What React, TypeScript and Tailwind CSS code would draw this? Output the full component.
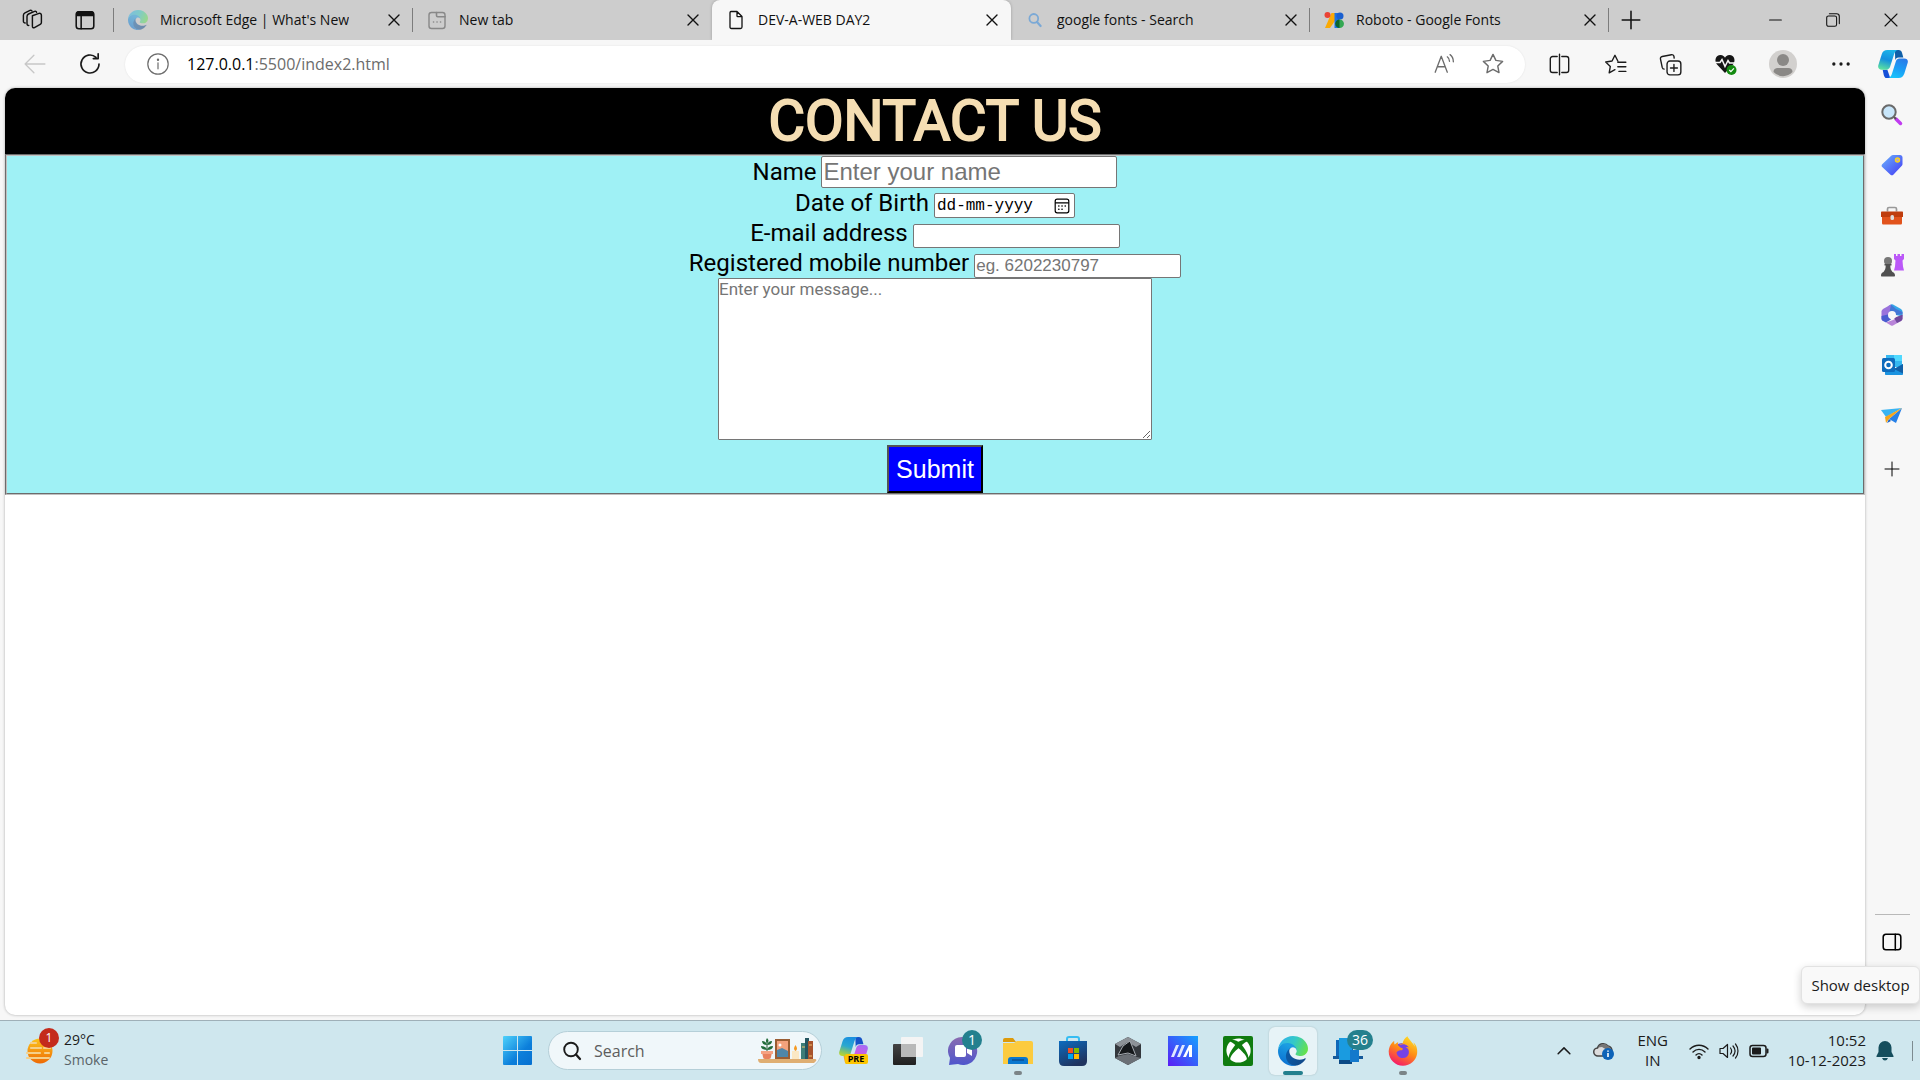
import React from "react";
import { FaXbox, FaFirefoxBrowser } from "react-icons/fa6";

type Kids = { children: React.ReactNode };

const Line = ({ size = 20, w = 1.2, className = "", children }: Kids & { size?: number; w?: number; className?: string }) => (
  <svg width={size} height={size} viewBox="0 0 20 20" fill="none" stroke="currentColor" strokeWidth={w} strokeLinecap="round" strokeLinejoin="round" className={className} aria-hidden="true">
    {children}
  </svg>
);

const EdgeLogo = ({ size, id, className = "" }: { size: number; id: string; className?: string }) => (
  <svg width={size} height={size} viewBox="0 0 256 256" className={className} aria-hidden="true">
    <defs>
      <linearGradient id={`${id}a`} x1="0.2" y1="0" x2="1" y2="0.2">
        <stop offset="0" stopColor="#0c59a4" />
        <stop offset="1" stopColor="#114a8b" />
      </linearGradient>
      <linearGradient id={`${id}b`} x1="0.6" y1="0.2" x2="0.3" y2="1">
        <stop offset="0" stopColor="#1b9de2" />
        <stop offset="1" stopColor="#0a6ed0" />
      </linearGradient>
      <linearGradient id={`${id}c`} x1="0" y1="0.3" x2="1" y2="0.6">
        <stop offset="0" stopColor="#2fb0ee" />
        <stop offset="0.5" stopColor="#35c9c6" />
        <stop offset="1" stopColor="#66e24b" />
      </linearGradient>
    </defs>
    <path fill={`url(#${id}a)`} d="M231 190.5c-3.4 1.8-6.9 3.4-10.5 4.7a101.500 101.500 0 0 1-35.900 6.400c-47.300 0-88.500-32.500-88.500-74.300 0-11.400 6.400-21.900 16.400-27.300-42.800 1.800-53.800 46.400-53.800 72.500 0 74 68.100 81.400 82.800 81.400 7.900 0 19.800-2.300 27-4.600l1.300-.4a128.300 128.300 0 0 0 66.600-52.800 4 4 0 0 0-5.400-5.600z" />
    <path fill={`url(#${id}b)`} d="M105.700 241.400c-8.900-5.500-16.600-12.800-22.700-21.300a80.500 80.500 0 0 1 29.500-120c3.200-1.500 8.500-4.100 15.600-4a32.400 32.400 0 0 1 25.700 13c4 5.300 6.300 11.800 6.400 18.500 0-.2 24.500-79.600-80-79.600-43.900 0-80 41.600-80 78.200-.2 19.300 4 38.500 12.100 56 27.600 58.800 94.800 87.600 156.400 67.100-21.100 6.600-44.100 3.700-62.900-8z" />
    <path fill={`url(#${id}c)`} d="M152.300 148.900c-.9 1-3.400 2.500-3.400 5.600 0 2.600 1.700 5.200 4.800 7.300 14.300 10 41.400 8.600 41.500 8.600 10.700 0 21.100-2.900 30.300-8.300a61.400 61.400 0 0 0 30.400-52.900c.3-22.400-8-37.300-11.300-43.900C223.500 23.900 177.700 0 128 0 58 0 1 56.200 0 126.200c.5-36.500 36.800-66 80-66 3.500 0 23.500.3 42 10.100 16.300 8.600 24.900 18.900 30.800 29.200 6.200 10.700 7.300 24.100 7.300 29.500s-2.700 13.300-7.800 19.900z" />
  </svg>
);

const Copilot = ({ id, size, pre = false }: { id: string; size: number; pre?: boolean }) => (
  <svg width={size} height={size} viewBox="0 0 32 32" aria-hidden="true">
    <defs>
      <linearGradient id={`${id}l`} x1="0.6" y1="0" x2="0.3" y2="1">
        <stop offset="0" stopColor={pre ? "#1a8fe0" : "#1bb5e8"} />
        <stop offset="0.5" stopColor={pre ? "#2aa8d0" : "#1490df"} />
        <stop offset="1" stopColor={pre ? "#b8d430" : "#5be0a0"} />
      </linearGradient>
      <linearGradient id={`${id}r`} x1="0.7" y1="0" x2="0.3" y2="1">
        <stop offset="0" stopColor={pre ? "#a56cf5" : "#2a7be8"} />
        <stop offset="0.5" stopColor={pre ? "#d25be0" : "#1b9cf5"} />
        <stop offset="1" stopColor={pre ? "#f5679a" : "#19c4fb"} />
      </linearGradient>
    </defs>
    <path d="M18 1h4c2 0 3 1 3.600 3L27 9h-5c-2 0-3 1-3.600 3z" fill={pre ? "#1553c8" : "#0f5fa8"} />
    <path d="M8 31h5l-3-9H5l1 5c.4 2 1 3 2 4z" fill={pre ? "#f5a623" : "#1650d8"} />
    <path d="M10 1h11c-2 .7-3 2-3.700 4l-4.400 14c-.7 2-2 3-4 3H4c-3 0-4.500-2-3.600-5L4 5.500C5 2.500 7 1 10 1z" fill={`url(#${id}l)`} />
    <path d="M22 31H11c2-.7 3-2 3.700-4l4.400-14c.7-2 2-3 4-3H28c3 0 4.500 2 3.600 5L28 26.500c-1 3-3 4.500-6 4.500z" fill={`url(#${id}r)`} />
  </svg>
);

const Divider = ({ dim = false }: { dim?: boolean }) => <span className={dim ? "h-6 w-px bg-transparent" : "h-6 w-px bg-[#7c7c7c]"} />;

const Cross = () => (
  <Line size={20} w={1.4}><path d="M5 5l10 10M15 5L5 15" /></Line>
);

const Tab = ({ icon, title, active = false, divider = false }: { icon: React.ReactNode; title: string; active?: boolean; divider?: boolean }) => (
  <div className={active ? "flex h-10 w-[299px] shrink items-center rounded-t-lg bg-[#f7f7f7] shadow-[0_0_3px_#00000040]" : "flex h-10 w-[299px] shrink items-center"}>
    <button role="tab" aria-selected={active} className="flex min-w-0 flex-1 items-center pl-[14px] text-left">
      <span className="flex w-5 shrink-0 justify-center">{icon}</span>
      <span className="ml-3 truncate">{title}</span>
    </button>
    <button aria-label={`Close ${title}`} className="mr-2"><Cross /></button>
    <Divider dim={!divider} />
  </div>
);

const PanelButton = ({ label, children, className = "" }: Kids & { label: string; className?: string }) => (
  <button aria-label={label} className={`flex items-center justify-center ${className}`}>{children}</button>
);

const TabStrip = () => (
  <header className="flex h-10 shrink-0 items-center bg-[#cdcdcd] text-sm text-[#111]">
    <PanelButton label="Workspaces" className="ml-[21px] w-6">
      <Line size={24}>
        <path d="M9.500 6.500l5.500-2c1-.3 2 .3 2 1.500v6c0 .8-.3 1.200-1 1.600l-4.800 2.700c-1 .5-1.700 0-1.700-1V8c0-.8 0-1.200 0-1.500z" />
        <path d="M6.500 14.500c-1 .2-1.500-.4-1.500-1.500V7c0-1 .5-1.600 1.300-2l5-2.200c.8-.3 1.500 0 1.700.7" />
        <path d="M3.500 12.500c-.8 0-1.500-.5-1.500-1.500V6c0-1 .5-1.600 1.300-2l4.200-2c.8-.3 1.500 0 1.700.6" />
      </Line>
    </PanelButton>
    <PanelButton label="Tab actions" className="ml-7 mr-4 w-6">
      <Line size={22} w={1.400}>
        <rect x="2" y="2.500" width="16" height="15.500" rx="2.500" />
        <path d="M2.500 6V4.500a2 2 0 0 1 2-2h11a2 2 0 0 1 2 2V6z" fill="currentColor" />
        <path d="M6.500 6v12" />
      </Line>
    </PanelButton>
    <Divider />
    <div role="tablist" className="flex min-w-0">
      <Tab divider title="Microsoft Edge | What's New" icon={<EdgeLogo size={20} id="tabedge" className="opacity-50" />} />
      <Tab title="New tab" icon={
        <Line size={21} w={1.400} className="text-[#888]">
          <rect x="2" y="2" width="16" height="16" rx="2.500" /><path d="M9.500 2v3c0 .8.400 1.200 1.200 1.200H18M6.500 11.500h.1M10 11.500h.1M13.500 11.500h.1" strokeWidth="1.600" />
        </Line>} />
      <Tab active title="DEV-A-WEB DAY2" icon={
        <Line size={22} w={1.300}><path d="M5 1.500h6L16 6.500V17c0 1-.5 1.500-1.500 1.500h-9c-1 0-1.500-.5-1.500-1.500V3c0-1 .3-1.500 1-1.500zM11 1.500V6c0 .5.200.7.700.7H16" /></Line>} />
      <Tab divider title="google fonts - Search" icon={
        <Line size={16} w={2.200} className="text-[#7ba9d6]"><circle cx="8.500" cy="8" r="5.500" /><path d="M12.500 12.500L17 17.500" strokeWidth="2.800" /></Line>} />
      <Tab divider title="Roboto - Google Fonts" icon={
        <svg width="20" height="20" viewBox="0 0 20 20" aria-hidden="true">
          <path d="M7.500 3h4v7L6 18H1z" fill="#fbaa05" /><circle cx="3.500" cy="5" r="3" fill="#ea4335" /><path d="M10.500 3h5v15h-5z" fill="#1a73e8" />
          <circle cx="16" cy="6" r="3.500" fill="#1a5fd0" /><path d="M15 9.500h.7a4.200 4.200 0 0 1 0 8.500H15z" fill="#34a853" /><path d="M15.500 9.500a4.200 4.200 0 0 0 0 8.500z" fill="#0d652d" />
        </svg>} />
    </div>
    <PanelButton label="New tab" className="ml-[11px]"><Line size={22} w={1.400}><path d="M10 2v16M2 10h16" /></Line></PanelButton>
    <div className="ml-auto flex pr-[18px]">
      <PanelButton label="Minimize" className="w-[22px]"><Line size={18} w={1.300}><path d="M4 10h13" /></Line></PanelButton>
      <PanelButton label="Restore" className="ml-9 w-[22px]">
        <Line size={18}><rect x="3" y="5.500" width="11" height="11.500" rx="2" /><path d="M6 3h8a3 3 0 0 1 3 3v8" /></Line>
      </PanelButton>
      <PanelButton label="Close" className="ml-9 w-[22px]"><Line size={20} w={1.100}><path d="M4 4l12 12M16 4L4 16" /></Line></PanelButton>
    </div>
  </header>
);

const star = "M10 2l2.400 5 5.600.8-4 3.900 1 5.500-5-2.700-5 2.700 1-5.500-4-3.900 5.600-.8z";

const AddressBar = () => (
  <div className="flex h-12 shrink-0 items-center bg-[#f7f7f7] text-[#1b1b1b]">
    <PanelButton label="Back" className="ml-6 text-[#c8c8c8]"><Line size={22}><path d="M9 2L1 10l8 8M1 10h18" /></Line></PanelButton>
    <PanelButton label="Refresh" className="ml-8"><Line size={24} w={1.400}><path d="M17.500 10A7.500 7.500 0 1 1 15 4.400M16.800 1.500v4h-4" /></Line></PanelButton>
    <div className="ml-[23px] flex h-[37px] flex-1 items-center rounded-full bg-white pl-[21px] pr-5 text-[#6c6c6c] shadow-[0_0_2px_#00000018]">
      <Line size={24} w={1}><circle cx="10" cy="10" r="8.500" /><path d="M10 9v5" /><circle cx="10" cy="6.400" r=".5" fill="currentColor" /></Line>
      <a href="#" className="ml-[17px] text-base"><span className="text-black">127.0.0.1</span>:5500/index2.html</a>
      <PanelButton label="Read aloud" className="ml-auto">
        <Line size={22}><path d="M2 17.500L7.500 3 13 17.500M4 12.500h7M13 3.500c1.300 1 2 2.300 2 4M15.500 1.500c2 1.500 3 3.600 3 6.500" /></Line>
      </PanelButton>
      <PanelButton label="Favorite this page" className="ml-[26px]"><Line size={24}><path d={star} /></Line></PanelButton>
    </div>
    <div className="flex items-center pl-[22px] pr-3">
      <PanelButton label="Split screen" className="w-6"><Line size={23}><path d="M8 3H4a2 2 0 0 0-2 2v10a2 2 0 0 0 2 2h4M12 3h4a2 2 0 0 1 2 2v10a2 2 0 0 1-2 2h-4M10 1v18" /></Line></PanelButton>
      <PanelButton label="Favorites" className="ml-8 w-6"><Line size={23}><path d="M12 7L9.500 2 7 7l-5.500.8 4 3.900-1 5.500 5-2.700M12 8h7M12 12h7M13 16h6" /></Line></PanelButton>
      <PanelButton label="Collections" className="ml-[31px] w-6">
        <Line size={23}><rect x="7" y="7" width="12" height="12" rx="2.500" /><path d="M13 10v6M10 13h6M4.500 14c-1 0-1.500-.7-1.700-1.500L1.300 5.300C1 4 1.700 3.200 2.800 3l8-1.500c1.100-.2 2 .4 2.200 1.500l.2 1.500" /></Line>
      </PanelButton>
      <PanelButton label="Browser essentials" className="ml-8 w-6">
        <svg width="24" height="24" viewBox="0 0 24 24" aria-hidden="true">
          <path d="M11 21L3 12.500C0 9 1.500 3 6.500 3 9 3 10.300 4.500 11 5.700 11.700 4.500 13 3 15.500 3 20.500 3 22 9 19 12.500z" fill="#151515" />
          <path d="M1 10.500h5l2-3 3 7 3-6 1.500 2.500H22" fill="none" stroke="#f7f7f7" strokeWidth="1.500" />
          <circle cx="17.500" cy="18" r="5" fill="#138a10" /><path d="M15.300 18l1.600 1.600 3-3.200" stroke="#fff" fill="none" strokeWidth="1.200" />
        </svg>
      </PanelButton>
      <PanelButton label="Profile" className="ml-[31px]">
        <svg width="28" height="28" viewBox="0 0 28 28" aria-hidden="true"><circle cx="14" cy="14" r="14" fill="#d2d0ce" /><circle cx="14" cy="10" r="6" fill="#8a8886" /><path d="M4.500 22c0-3 2-4 4-4h11c2 0 4 1 4 4a13 13 0 0 1-19 0z" fill="#8a8886" /></svg>
      </PanelButton>
      <PanelButton label="Settings and more" className="ml-8 w-6"><Line size={22}><g fill="currentColor" stroke="none"><circle cx="3.500" cy="10" r="1.500" /><circle cx="10" cy="10" r="1.500" /><circle cx="16.500" cy="10" r="1.500" /></g></Line></PanelButton>
      <PanelButton label="Copilot" className="ml-[25px]"><Copilot id="cp" size={30} /></PanelButton>
    </div>
  </div>
);

const field = "rounded-[2px] border border-[#767676] bg-white px-px outline-none placeholder:text-[#757575] placeholder:opacity-100 font-['Liberation_Sans',sans-serif]";

const ContactPage = () => (
  <main className="ml-[5px] min-w-0 flex-1 overflow-hidden rounded-[10px] bg-white shadow-[0_0_3px_#00000050] font-['Roboto',sans-serif] text-black">
    <h1 className="flex h-[66px] items-center justify-center bg-black text-[56px] leading-[66px] font-normal text-[#f5deb3] [-webkit-text-stroke:2px_#f5deb3]">CONTACT US</h1>
    <form onSubmit={(e) => e.preventDefault()} className="flex flex-col items-center border-2 border-[#c0c0c0] bg-[#9ff1f5] text-2xl leading-[30px] [border-style:groove]">
      <div className="flex items-center gap-[5px]">
        <label htmlFor="name">Name</label>
        <input id="name" placeholder="Enter your name" className={`h-8 w-[296px] text-2xl ${field}`} />
      </div>
      <div className="flex items-end gap-[5px]">
        <label htmlFor="dob">Date of Birth</label>
        <div className="flex h-[25px] w-[141px] items-center rounded-[2px] border border-[#767676] bg-white pr-1 pl-[2px]">
          <input id="dob" placeholder="dd-mm-yyyy" className="h-5 w-full min-w-0 font-['Liberation_Mono',monospace] text-base leading-5 outline-none placeholder:text-black placeholder:opacity-100" />
          <PanelButton label="Open calendar">
            <Line size={16} w={1.500}><rect x="1.500" y="1.500" width="17" height="17" rx="2.500" /><path d="M2 6h16" /><path d="M6 10h.1M10 10h.1M14 10h.1M6 14h.1M10 14h.1" strokeWidth="2" /></Line>
          </PanelButton>
        </div>
      </div>
      <div className="flex items-end gap-[5px]">
        <label htmlFor="email">E-mail address</label>
        <input id="email" type="email" className={`h-6 w-[207px] text-[17px] ${field}`} />
      </div>
      <div className="flex items-end gap-[5px]">
        <label htmlFor="mobile">Registered mobile number</label>
        <input id="mobile" type="tel" placeholder="eg. 6202230797" className={`h-6 w-[207px] text-[17px] ${field}`} />
      </div>
      <textarea aria-label="Message" placeholder="Enter your message..." className="h-[162px] w-[434px] resize rounded-[1px] border border-[#767676] bg-white text-[17px] leading-5 outline-none placeholder:text-[#757575] placeholder:opacity-100" />
      <button type="submit" className="mt-[5px] h-12 w-24 border-2 border-black bg-[#0000ff] font-['Liberation_Sans',sans-serif] text-[25px] text-white [border-style:outset]">Submit</button>
    </form>
  </main>
);

const SideRail = () => (
  <aside className="flex w-[55px] shrink-0 flex-col items-center pt-[15px] pr-px text-black">
    <div className="flex flex-col items-center gap-[26px]">
      <PanelButton label="Search">
        <svg width="24" height="24" viewBox="0 0 24 24" aria-hidden="true"><path d="M16 16l4.500 4.500" stroke="#c03bf0" strokeWidth="3.500" strokeLinecap="round" /><path d="M13 13l3 3" stroke="#555" strokeWidth="2" /><circle cx="9" cy="9" r="6.700" fill="#c8e6fa" stroke="#6a6a6a" strokeWidth="2" /></svg>
      </PanelButton>
      <PanelButton label="Shopping">
        <svg width="24" height="24" viewBox="0 0 24 24" aria-hidden="true"><defs><linearGradient id="tag" x1="0" y1="0" x2="1" y2="1"><stop offset="0" stopColor="#6ab4fb" /><stop offset="1" stopColor="#4338f5" /></linearGradient></defs><path d="M13 2h7c1.500 0 2.500 1 2.500 2.500V11c0 .7-.2 1.200-.7 1.700l-8.500 9c-.8.800-2 .8-2.800 0L2.200 14c-.8-.8-.8-2 0-2.800l9-8.500c.5-.5 1.100-.7 1.800-.7z" fill="url(#tag)" /><circle cx="17.500" cy="7" r="2" fill="#b9a3d0" stroke="#fbd41b" strokeWidth="1.400" /></svg>
      </PanelButton>
      <PanelButton label="Tools">
        <svg width="24" height="24" viewBox="0 0 24 24" aria-hidden="true"><path d="M7.500 8.500V6C7.500 5 8 4.500 9 4.500h6c1 0 1.500.5 1.500 1.500v2.500" fill="none" stroke="#999" strokeWidth="1.700" /><path d="M2 12h20v8c0 1-.6 1.500-1.500 1.500h-17c-1 0-1.500-.5-1.500-1.500z" fill="#e2531c" /><path d="M2 8.500h20c.7 0 1 .4 1 1V14H1V9.500c0-.6.300-1 1-1z" fill="#bf3d0e" /><rect x="10.500" y="12" width="3.500" height="5" rx="1.500" fill="#ddd" /></svg>
      </PanelButton>
      <PanelButton label="Games">
        <svg width="24" height="24" viewBox="0 0 24 24" aria-hidden="true"><path d="M14 1h2v2h1.500V1h2.500v2h1.500V1H24v5l-1.500 1.500.5 6 1 4H14l1-4 .5-6L14 6z" fill="#bb58f8" /><circle cx="8" cy="8" r="4" fill="#777" /><path d="M4.500 11h7v1.500h-1.200c0 3 .7 4.500 2.200 6.500 1.500.5 2.500 1.500 2.500 3.500 0 .7-.3 1-1 1H2c-.7 0-1-.3-1-1 0-2 1-3 2.500-3.500 1.500-2 2.200-3.500 2.200-6.500H4.500z" fill="#505050" /></svg>
      </PanelButton>
      <PanelButton label="Microsoft 365">
        <svg width="24" height="24" viewBox="0 0 24 24" aria-hidden="true">
          <path d="M11 1.500q1-.6 2 0l8 4.500q1.500 1 1.500 2.500v5L16 12 8.500 6.500z" fill="#35a7e8" />
          <path d="M11 1.500L8.500 3v9l3.500-4 4 4 6.500-1V9L16 6z" fill="#4277d6" />
          <path d="M11 1.500L3 6q-1.500 1-1.500 2.500v7q0 1.500 1 2.300l6-3.300z" fill="#9a72dc" />
          <path d="M1.500 13v2.500q0 1.500 1.500 2.500l3 1.500 5-3-3-5z" fill="#4b5cd0" />
          <path d="M6 19.500l5 3q1 .5 2 0l8-4.500q1.500-1 1.500-2.500v-4L13 17z" fill="#b884d8" />
          <path d="M22.500 11.500v4q0 1.500-1.500 2.500l-4 2-3-5z" fill="#70489c" />
          <circle cx="12" cy="12" r="4" fill="#f7f7f7" />
        </svg>
      </PanelButton>
      <PanelButton label="Outlook">
        <svg width="24" height="24" viewBox="0 0 24 24" aria-hidden="true"><path d="M6 2h16v12H6z" fill="#35b8f1" /><path d="M14 2h8v6h-8z" fill="#50d9ff" /><path d="M5 12l9 4 9-5v10c0 .7-.4 1-1 1H6c-.6 0-1-.3-1-1z" fill="#1b93e0" /><path d="M14 16l9-5v9.500z" fill="#1160a8" /><rect x="2" y="5" width="13" height="14" rx="1.500" fill="#0f6cbd" /><circle cx="8.500" cy="12" r="3.300" fill="none" stroke="#fff" strokeWidth="2" /></svg>
      </PanelButton>
      <PanelButton label="Drop">
        <svg width="24" height="24" viewBox="0 0 24 24" aria-hidden="true"><path d="M1 7l21-2-16 9z" fill="#39b4f2" /><path d="M22 5l-6 15-7-4z" fill="#2680e8" /><path d="M5 14l17-9L9 16l-3 4z" fill="#f5a51b" /><path d="M9 16l-2 4 4-2z" fill="#1a5fc0" /></svg>
      </PanelButton>
    </div>
    <PanelButton label="Customize" className="mt-8"><Line size={20} w={1}><path d="M10 3v14M3 10h14" /></Line></PanelButton>
    <span className="mt-auto h-px w-[35px] bg-[#b9b9b9]" />
    <PanelButton label="Toggle sidebar" className="mt-4 mb-[62px]">
      <Line size={22} w={1.400}><rect x="2" y="3" width="16" height="14" rx="2.500" /><path d="M13 3v14" /></Line>
    </PanelButton>
  </aside>
);

const Task = ({ label, children, active = false, running = false, badge }: Kids & { label: string; active?: boolean; running?: boolean; badge?: string }) => (
  <button aria-label={label} className={active ? "relative flex size-12 items-center justify-center rounded-md bg-[#e7f3f7] shadow-[0_0_2px_#00000030]" : "relative flex size-12 items-center justify-center"}>
    {children}
    {badge && <span className="absolute top-[3px] left-[23px] flex h-5 min-w-5 items-center justify-center rounded-full bg-[#24808e] px-[5px] text-sm leading-5 text-white">{badge}</span>}
    {active && <span className="absolute bottom-0 h-1 w-5 rounded-full bg-[#24808e]" />}
    {running && <span className="absolute bottom-0 h-1 w-2 rounded-full bg-[#7b8487]" />}
  </button>
);

const Taskbar = () => (
  <footer className="grid h-[60px] shrink-0 grid-cols-[1fr_auto_1fr] items-center border-t border-[#9fb0b8] bg-[#cfe7ee] text-sm text-[#1b1b1b]">
    <button className="flex items-center pl-6 text-left">
      <span className="relative">
        <svg width="30" height="30" viewBox="0 0 30 30" aria-hidden="true"><defs><linearGradient id="sun" x1="0" y1="0" x2="0" y2="1"><stop offset="0" stopColor="#fcc41c" /><stop offset="1" stopColor="#ee6a05" /></linearGradient></defs><circle cx="16" cy="15" r="12.500" fill="url(#sun)" /><path d="M7 7h5M7 12h10M20 12h6M3 17h13M21 17h4M3 22h22" stroke="#f5d089" strokeWidth="2.200" strokeLinecap="round" /></svg>
        <span className="absolute -top-2 left-[15px] flex size-5 items-center justify-center rounded-full bg-[#c42b1c] text-xs text-white">1</span>
      </span>
      <span className="ml-[10px] flex flex-col pb-[2px] leading-5"><span>29°C</span><span className="text-[#5a6468]">Smoke</span></span>
    </button>
    <nav aria-label="Taskbar" className="flex items-center gap-[7px]">
      <Task label="Start">
        <svg width="29" height="29" viewBox="0 0 29 29" aria-hidden="true"><defs><linearGradient id="win" x1="0" y1="0" x2="1" y2="1"><stop offset="0" stopColor="#4fd2fb" /><stop offset=".6" stopColor="#0c7fdb" /><stop offset="1" stopColor="#0670d0" /></linearGradient></defs><path d="M1 0h13v14H0V1q0-1 1-1zM15 0h13q1 0 1 1v13H15zM0 15h14v14H1q-1 0-1-1zM15 15h14v13q0 1-1 1H15z" fill="url(#win)" /></svg>
      </Task>
      <label className="flex h-[39px] w-[274px] items-center rounded-full border border-[#b5cfd8] bg-[#f0f7fa] pr-1 pl-[13px]">
        <Line size={20} w={1.900} className="shrink-0"><circle cx="9" cy="8.500" r="6.800" /><path d="M14 13.500l4 4.500" strokeWidth="2.300" /></Line>
        <input aria-label="Search" placeholder="Search" className="ml-3 w-full min-w-0 text-base outline-none placeholder:text-[#5d5d5d] placeholder:opacity-100" />
        <svg width="60" height="28" viewBox="0 0 60 28" className="shrink-0" aria-hidden="true">
          <path d="M1 22h57q2 0 1 2l-2 2H4q-3 0-3-4z" fill="#dfae72" /><path d="M5 15h10l-1 5q0 2-2 2H8q-2 0-2-2z" fill="#e8825f" /><path d="M4 14h12v3H4z" fill="#f5a283" />
          <path d="M10 14V3" stroke="#2c5d3a" strokeWidth="1" /><path d="M10 1q3 3 0 5q-2-2 0-5zM10 8Q5 8 5 4q4 0 5 4zM10 8q5 0 5-4-4 0-5 4zM10 13q-6 0-6-4 5 0 6 4zM10 13q6 0 6-4-5 0-6 4z" fill="#226b3a" />
          <rect x="18" y="2" width="15" height="20" fill="#9a5d33" /><rect x="20" y="4" width="11" height="16" fill="#f3a27c" /><path d="M20 13l5-2 6 3v6H20z" fill="#4f86a8" /><circle cx="23" cy="8" r="1.500" fill="#fff" />
          <path d="M35 14h7v8h-7z" fill="#fbe8c4" /><path d="M38.500 8q3 4 0 6q-3-2 0-6z" fill="#f59a23" />
          <path d="M44 6h5v16h-5z" fill="#3d7d78" /><path d="M48 1h4v21h-4z" fill="#265560" /><path d="M51 4h5v18h-5z" fill="#a8532c" /><path d="M52 8h3M52 19h3M45 10h3" stroke="#f2c16b" />
        </svg>
      </label>
      <Task label="Copilot preview">
        <span className="relative flex"><Copilot id="cpp" size={29} pre /><span className="absolute top-[18px] left-[6px] flex h-[10px] w-[23px] items-center justify-center rounded-[2px] bg-[#fdc500] text-[9px] font-bold text-black">PRE</span></span>
      </Task>
      <Task label="Task view">
        <svg width="32" height="32" viewBox="0 0 32 32" aria-hidden="true"><defs><linearGradient id="tv" x1="0" y1="0" x2="0" y2="1"><stop offset="0" stopColor="#444" /><stop offset="1" stopColor="#202020" /></linearGradient></defs><rect x="1" y="9" width="23" height="21" rx="1" fill="url(#tv)" /><rect x="9" y="2" width="22" height="20" rx="1" fill="#f4f4f4" /><path d="M9 9h15v13H9z" fill="#b9b9b9" /></svg>
      </Task>
      <Task label="Chat" badge="1">
        <svg width="30" height="30" viewBox="0 0 30 30" aria-hidden="true"><defs><linearGradient id="chat" x1="0" y1="0" x2="0" y2="1"><stop offset="0" stopColor="#8a6bb0" /><stop offset="1" stopColor="#4f56cc" /></linearGradient></defs><path d="M15 1a14 14 0 1 1-5 27l-9 1 1-7A14 14 0 0 1 15 1z" fill="url(#chat)" /><rect x="7" y="9" width="11" height="12" rx="2" fill="#fff" /><path d="M19 13l5-3v10l-5-3z" fill="#fff" /></svg>
      </Task>
      <Task label="File Explorer" running>
        <svg width="30" height="28" viewBox="0 0 30 28" aria-hidden="true"><path d="M0 3q0-2 2-2h8l3 4H0z" fill="#dd9a0a" /><path d="M0 6h11l3-2h14q2 0 2 2v21H0z" fill="#fccb3f" /><path d="M5 27v-4q0-3 3-3h14q3 0 3 3v4z" fill="#0a77cf" /><path d="M9 23h12" stroke="#0d4f93" strokeWidth="1.500" /></svg>
      </Task>
      <Task label="Microsoft Store">
        <svg width="30" height="30" viewBox="0 0 30 30" aria-hidden="true"><defs><linearGradient id="store" x1="0" y1="0" x2="0.500" y2="1"><stop offset="0" stopColor="#0b6cc0" /><stop offset="1" stopColor="#20345f" /></linearGradient></defs><path d="M9 6V3q0-2 2-2h8q2 0 2 2v3" fill="none" stroke="#36bdf2" strokeWidth="2" /><path d="M1 5h28v20q0 5-5 5H6q-5 0-5-5z" fill="url(#store)" /><path d="M10 12h5v5h-5z" fill="#f25022" /><path d="M16 12h5v5h-5z" fill="#7fba00" /><path d="M10 18h5v5h-5z" fill="#00a4ef" /><path d="M16 18h5v5h-5z" fill="#ffb900" /></svg>
      </Task>
      <Task label="Armoury Crate">
        <svg width="30" height="30" viewBox="0 0 30 30" aria-hidden="true"><path d="M15 1l13 7v14l-13 7-13-7V8z" fill="#34383d" /><path d="M15 1l13 7-5 3-8-5-8 5-5-3z" fill="#8d9298" /><path d="M17 5l6 15-8-3-10 2 5-9z" fill="#15181b" stroke="#a5aab0" /><path d="M2 22l4-2 9-2 9 3 4 1-13 7z" fill="#6b7076" /></svg>
      </Task>
      <Task label="MyASUS">
        <svg width="30" height="30" viewBox="0 0 30 30" aria-hidden="true"><defs><linearGradient id="asus" x1="1" y1="0" x2="0" y2="1"><stop offset="0" stopColor="#13a2ff" /><stop offset="1" stopColor="#5b1cf5" /></linearGradient></defs><path d="M0 0h30v30H0z" fill="url(#asus)" /><path d="M3 21L8 9h3L6 21zM9 21l5-12h3l-5 12z" fill="#dfe8ff" /><path d="M15 21l6-12h3v12h-3v-7l-3 7z" fill="#fff" /></svg>
      </Task>
      <Task label="Xbox"><span className="flex size-[30px] items-center justify-center rounded-[2px] bg-[#107c10]"><FaXbox size={25} color="#fff" /></span></Task>
      <Task label="Microsoft Edge" active><EdgeLogo size={30} id="taskedge" /></Task>
      <Task label="Phone Link" badge="36">
        <svg width="30" height="28" viewBox="0 0 30 28" aria-hidden="true"><path d="M3 3h17v17H3z" fill="#0f68b8" /><path d="M0 19h30v3H0z" fill="#155a9a" /><path d="M6 1h13v26H6z" fill="#1a9be0" /><path d="M6 23h13v4H6z" fill="#0c4a85" /><path d="M17 13h9v12h-9z" fill="#1479cc" /></svg>
      </Task>
      <Task label="Firefox" running>
        <svg width="30" height="30" viewBox="0 0 30 30" aria-hidden="true"><defs><linearGradient id="fox" x1="0.800" y1="0" x2="0.300" y2="1"><stop offset="0" stopColor="#ffe226" /><stop offset=".5" stopColor="#ff8a16" /><stop offset="1" stopColor="#f5156c" /></linearGradient></defs><circle cx="14" cy="16" r="9" fill="#7542e5" /><FaFirefoxBrowser size={30} fill="url(#fox)" /></svg>
      </Task>
    </nav>
    <div className="flex items-center justify-end">
      <PanelButton label="Show hidden icons"><Line size={18} w={1.700}><path d="M3.500 13L10 6.500l6.500 6.500" /></Line></PanelButton>
      <PanelButton label="OneDrive" className="ml-5">
        <svg width="22" height="22" viewBox="0 0 22 22" aria-hidden="true"><path d="M5 16a4 4 0 0 1-.5-8A6 6 0 0 1 15 6q4 1 4 5v5z" fill="#dcdcdc" stroke="#444" strokeWidth="1.500" /><path d="M5 7.500A6 6 0 0 1 15 6q2 .5 3 3l-4 1-5-3z" fill="#777" /><circle cx="15" cy="14" r="6" fill="#0d63b8" /><path d="M15 13v4M15 10.500v1.300" stroke="#fff" strokeWidth="1.600" /></svg>
      </PanelButton>
      <button className="ml-5 w-9 pb-[2px] text-center text-[15px] leading-5">ENG<br />IN</button>
      <button aria-label="Network, volume and battery" className="ml-[18px] flex items-center gap-[10px]">
        <Line size={20} w={1.400}><path d="M1 8c5-5 13-5 18 0M4 11c3.500-3.500 8.500-3.500 12 0M7 14c1.800-1.800 4.200-1.800 6 0" /><circle cx="10" cy="16.500" r="1" fill="currentColor" /></Line>
        <Line size={20}><path d="M1 7.500h3L8.500 3.500v13L4 12.500H1zM11.500 7c1.500 2 1.500 4 0 6M14 5c2.500 3 2.500 7 0 10M16.500 3c3.300 4 3.300 10 0 14" /></Line>
        <Line size={20} w={1.500}><rect x="1" y="4.500" width="16" height="11" rx="2.500" /><path d="M4 7.500h7v5H4zM18.500 8.500v3" fill="currentColor" strokeWidth="2" /></Line>
      </button>
      <button className="ml-[19px] pb-[2px] text-right text-[15px] leading-5">10:52<br />10-12-2023</button>
      <PanelButton label="Notifications" className="ml-[10px]">
        <svg width="18" height="20" viewBox="0 0 18 20" fill="#154e5d" aria-hidden="true"><path d="M9 0a6.500 6.500 0 0 1 6.500 6.500V11l2 4q.5 1-.5 1H1q-1 0-.5-1l2-4V6.500A6.500 6.500 0 0 1 9 0zM6 17h6q-1 2.500-3 2.500T6 17z" /></svg>
      </PanelButton>
      <button aria-label="Show desktop" className="mr-[7px] ml-[18px] h-5 w-px bg-[#7d8b90]" />
    </div>
  </footer>
);

export default function App() {
  return (
    <div className="relative flex h-screen flex-col overflow-hidden bg-[#f7f7f7] font-['Open_Sans','Noto_Sans',sans-serif]">
      <TabStrip />
      <AddressBar />
      <div className="flex min-h-0 flex-1 pb-[5px]">
        <ContactPage />
        <SideRail />
      </div>
      <Taskbar />
      <div role="tooltip" className="absolute right-0 bottom-[76px] flex h-[38px] w-[119px] items-center justify-center rounded-md border border-[#e2e2e2] bg-[#f9f9f9] text-[15px] text-[#1b1b1b] shadow-[0_3px_8px_#00000030]">Show desktop</div>
    </div>
  );
}
